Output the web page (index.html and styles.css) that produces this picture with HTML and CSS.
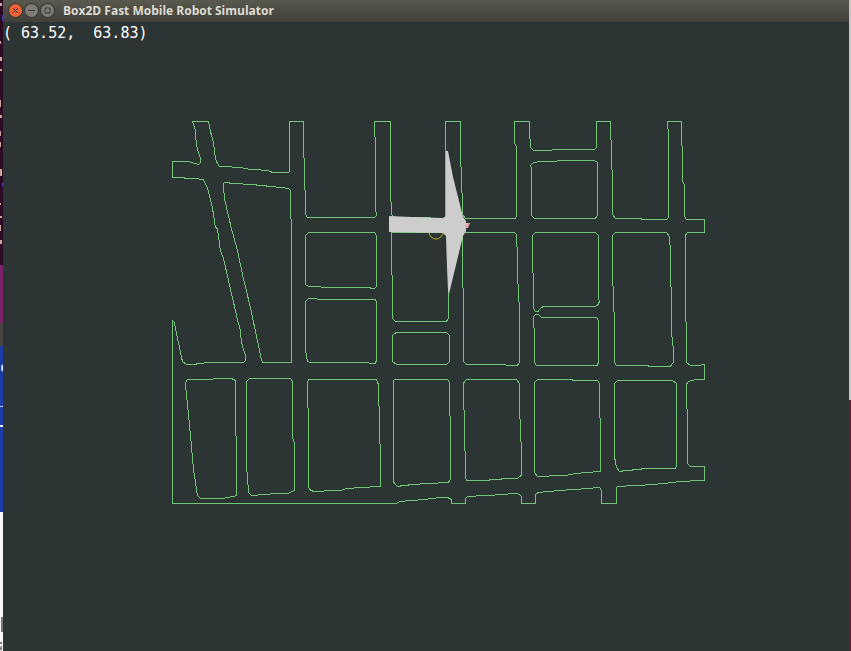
FILE: index.html
```html
<!DOCTYPE html>
<html lang="en">
<head>
  <meta charset="UTF-8">
  <meta name="viewport" content="width=device-width, initial-scale=1.0">
  <title>Box2D Fast Mobile Robot Simulator</title>
  <link rel="stylesheet" href="styles.css">
</head>
<body>
  <div class="desktop-left">
    <svg class="behind" viewBox="0 0 3 651" preserveAspectRatio="xMinYMin slice">
      <!-- edges of the terminal and launcher behind the window -->
      <path class="term" d="M0 3H2V6H0ZM0 41H1V44H0ZM0 57H2V61H0ZM0 69H2V71H0ZM0 100H1V107H0ZM0 115H2V118H0ZM0 131H1V136H0ZM0 142H1V147H0ZM0 169H2V176H0ZM0 203H1V205H0ZM0 216H2V218H0ZM0 225H1V231H0ZM0 240H2V244H0Z"/>
      <path class="term-blue" d="M2 15H3V21H2ZM2 183H3V187H2Z"/>
      <path class="icon" d="M3 364L1 366V370L3 372ZM0 406H3V407H0Z"/>
      <path class="page" d="M1 617H3V632H1ZM0 642H2V644H0ZM1 646H2V650H0V648Z"/>
    </svg>
  </div>
  <main class="window">
    <header class="titlebar">
      <button class="win-btn close" type="button" aria-label="Close">
        <svg viewBox="0 0 13 13"><path d="M4 4L9 9M9 4L4 9"/></svg>
      </button>
      <button class="win-btn" type="button" aria-label="Minimize">
        <svg viewBox="0 0 13 13"><path d="M3 6.5H10"/></svg>
      </button>
      <button class="win-btn" type="button" aria-label="Maximize">
        <svg viewBox="0 0 13 13"><path d="M4 4H9V9H4Z"/></svg>
      </button>
      <h1 class="title">Box2D Fast Mobile Robot Simulator</h1>
    </header>
    <section class="view">
      <svg class="map" viewBox="3 22 846 629">
        <g class="walls" transform="translate(.4 .4)">
          <!-- outer wall -->
          <path d="M192 121H208L209 126L210 131L212 138L213 142L214 150L215 158L217 163L219 166L240 167L250 169L267 170L272 172H288L289 171V121H303V157L304 158V189L305 190V214L307 217H374L376 215L375 206V137L374 136V121H390V201L391 202V214L394 217H411L443 218L445 216V121H460V166L461 167V192L462 193V214L465 218H515L516 216V146L514 143V121H529V138L530 139V147L533 150H540L570 149H594L596 147V121H610V139L611 140V169L612 170V214L615 218H641V219H666L668 217V129L667 128V121H681V145L682 146V181L684 184V216L686 219H704V232H687L685 235V321L686 322V362L690 365L700 365L702 364H704V379H696L688 381L686 384V408L687 409V463L690 466H704V480L680 481L665 483L640 485L617 486L616 488V503H601V490L599 487H597L590 488L560 490L538 492L535 494V503H521V496L519 494L515 493L490 495L467 496L465 498V503H451V499L447 497H440L425 499L400 501L396 503H172V320L174 322L175 328L178 342L181 356L182 361L186 364H195L198 363L212 362H243L245 360V355L241 342L240 330L237 319L235 310L231 293L227 275L223 258L220 250L217 228L215 227L212 207L207 187L203 179L192 178L172 177V161H187L198 164L200 162V158L196 145L195 130Z"/>
          <!-- city blocks -->
          <path d="M223 183L225 182H228L230 183L250 184L270 186L288 188L290 190V218L291 219V362H262L261 359L250 307L243 278L237 250L231 228L224 198Z"/>
          <path d="M308 232H374L376 235V286L374 288L364 287H321L320 286H308L305 284V235Z"/>
          <path d="M308 298H316L317 299H375L376 302V360L375 363H371L365 362H310L307 361L306 354L305 350V301Z"/>
          <path d="M391 232H448V318L446 321H395L392 318V275L391 274Z"/>
          <path d="M396 332H446L449 335V361L446 364H396L392 361V335Z"/>
          <path d="M462 232H514L516 234L517 255L518 301L519 302V362L517 365H506L505 364H466L463 361V288L462 287Z"/>
          <path d="M530 165L533 162L541 161H556L557 160H594L597 162V177L597 215L595 218H534L531 215V167Z"/>
          <path d="M535 232H595L598 235V298L599 301L598 304L595 306H543L539 309L538 311H535L533 308V273L532 272V235Z"/>
          <path d="M533 316L535 314H538L541 317H596L598 320V362L597 365H536L534 362V328L533 327Z"/>
          <path d="M615 232H666L669 236L670 250V286L671 287V327L672 343L673 347V362L670 366H648V365H616L614 362V325L613 291L612 276V235Z"/>
          <path d="M185 383L187 379H212L213 378H231L235 380V435L236 436V495L233 496L223 498L200 498L197 495L193 468L191 445L188 413Z"/>
          <path d="M249 378H290L292 381V437L294 443V490L288 493L258 494L257 495H251L248 492L247 472L246 471V381Z"/>
          <path d="M308 379H376L378 384L379 420L380 458V486L347 488L340 490L313 491L309 489L308 486V408L307 407V383Z"/>
          <path d="M394 379H447L449 382V415L450 416V479L448 482L413 484L397 486L394 483L393 481V381Z"/>
          <path d="M466 379H516L519 383L520 441L521 442V475L517 478L491 479L488 480H466L465 477L464 410L463 409V383Z"/>
          <path d="M537 379H572V380H597L599 383V397L600 430V471L576 473L566 475L537 476L534 472V382Z"/>
          <path d="M617 380H672L676 383V466L675 468H643L640 469L627 470L619 471L616 467L615 460L614 458V383Z"/>
        </g>
        <!-- robot body, laser scan, heading marker -->
        <circle class="robot" cx="436" cy="232" r="7"/>
        <path class="scan" d="M389 216L411 217L443 218L446 216V151H448L453 177L463 217L466 221V231L463 236L449 294L448 290L447 267L446 236L443 233L389 232Z"/>
        <path class="goal" d="M465 223H470L468 228H465Z"/>
      </svg>
      <output class="coords">( 63.52,  63.83)</output>
    </section>
  </main>
  <div class="desktop-right"></div>
</body>
</html>
```
FILE: styles.css
```css
* {
  box-sizing: border-box;
}
body {
  margin: 0;
  height: 100vh;
  display: grid;
  grid-template-columns: 3px 1fr 2px;
  background: #2d3434;
  overflow: hidden;
}
.desktop-left {
  overflow: hidden;
  background: linear-gradient(#2c0a24 0 265px, #7b2269 265px 323px, #464540 323px 346px, #1d3ca8 346px 425px, #f4f4f8 425px 427px, #1d3ca8 427px 512px, #f8f8fa 512px);
}
.behind {
  display: block;
  width: 3px;
  height: 651px;
}
.term {
  fill: #c9a89c;
}
.term-blue {
  fill: #3c3a9c;
}
.icon {
  fill: #cdd6f2;
}
.page {
  fill: #77777a;
}
.desktop-right {
  background: linear-gradient(#c9c5c7 0 400px, #6e1733 400px);
}
.window {
  display: flex;
  flex-direction: column;
  min-width: 0;
}
.titlebar {
  display: flex;
  align-items: center;
  gap: 3px;
  height: 22px;
  padding: 0 6px 1px;
  background: linear-gradient(#5a594f, #403f3a);
}
.win-btn {
  width: 13px;
  height: 13px;
  padding: 0;
  border: 0;
  border-radius: 50%;
  background: #7d7b73;
  box-shadow: 0 0 0 1px #3a3934;
}
.win-btn svg {
  display: block;
  fill: none;
  stroke: #3c3b37;
}
.win-btn.close {
  background: #ee6238;
}
.title {
  margin: 0 0 0 6px;
  color: #dfdbd2;
  font: bold 12px/20px "Open Sans", sans-serif;
  white-space: nowrap;
}
.view {
  position: relative;
  flex: 1;
  min-height: 0;
  background: #2d3434;
}
.map {
  display: block;
  width: 100%;
  height: 100%;
}
.walls {
  fill: none;
  stroke: #70c577;
  shape-rendering: crispEdges;
}
.robot {
  fill: none;
  stroke: #c0b528;
}
.scan {
  fill: #cdcdcd;
}
.goal {
  fill: #e9aaaa;
}
.coords {
  position: absolute;
  top: 0;
  left: 0;
  color: #fff;
  font: 15px/22px "DejaVu Sans Mono", monospace;
  white-space: pre;
}
```
